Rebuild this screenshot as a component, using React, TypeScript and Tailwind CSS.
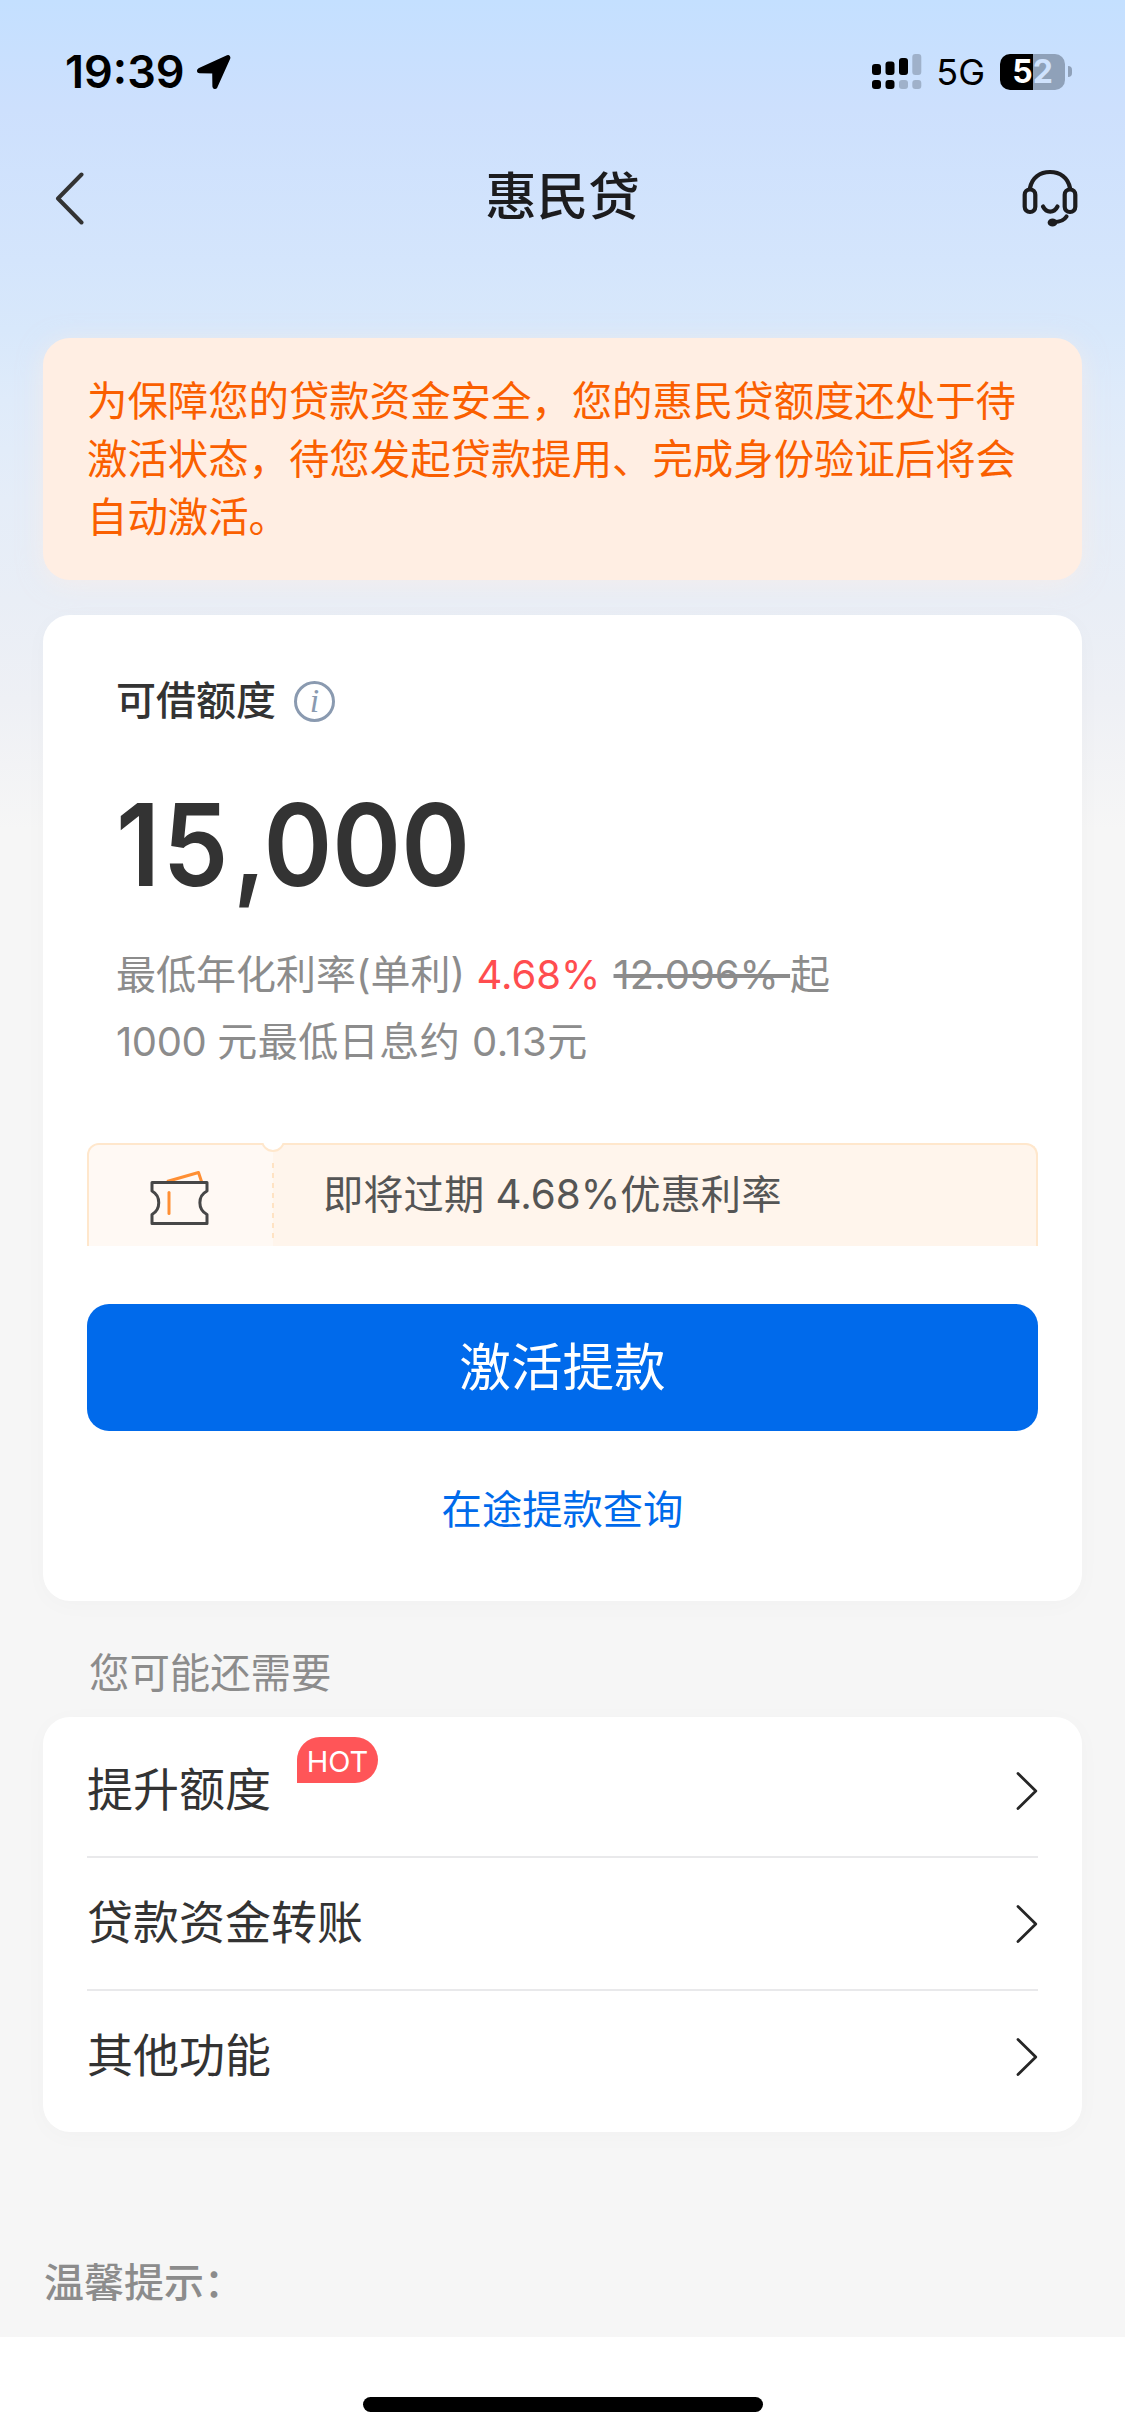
import type { ReactNode } from 'react';

type MenuRowProps = {
  label: string;
  badge?: string;
  last?: boolean;
};

const ArrowIcon = () => (
  <svg width="35" height="36" viewBox="0 0 35 36" className="ml-[11px]">
    <path
      d="M31.5 2.5 L3 15.5 C1.8 16.2 2 18 3.5 18 L17.5 18.3 L17.7 32.5 C17.8 34 19.4 34.2 20.1 33 L33 4.3 C33.4 3 32.6 2 31.5 2.5 Z"
      fill="#000"
      stroke="#000"
      strokeWidth="2.6"
      strokeLinejoin="round"
    />
  </svg>
);

const SignalIcon = () => (
  <svg width="50" height="36" viewBox="0 0 50 36">
    <g fill="#000">
      <rect x="0" y="10" width="9" height="11" rx="3" />
      <rect x="13.5" y="7.5" width="9" height="13.5" rx="3" />
      <rect x="27" y="4" width="9" height="17" rx="3" />
      <rect x="0" y="26" width="9" height="9" rx="3" />
      <rect x="13.5" y="26" width="9" height="9" rx="3" />
    </g>
    <g fill="#9fb1ca">
      <rect x="40.3" y="0" width="9" height="21" rx="3" />
      <rect x="27" y="26" width="9" height="9" rx="3" />
      <rect x="40.3" y="26" width="9" height="9" rx="3" />
    </g>
  </svg>
);

const HeadsetIcon = () => (
  <svg width="56" height="58" viewBox="0 0 56 58" fill="none" stroke="#1c1c1e" strokeWidth="4.2" strokeLinecap="round">
    <path d="M8 19 C10 8.5 18 3 28 3 C38 3 46 8.5 48 19" />
    <rect x="2.7" y="20.5" width="10.6" height="22.5" rx="5.2" />
    <rect x="42.7" y="20.5" width="10.6" height="22.5" rx="5.2" />
    <path d="M21 37.5 C24.5 44.3 32 44.3 35.5 37.5" />
    <path d="M44.5 47.5 C42 51.5 37.5 53 32 53" />
    <ellipse cx="30.5" cy="53.5" rx="2.8" ry="2" fill="#1c1c1e" />
  </svg>
);

const TicketIcon = () => (
  <svg width="60" height="56" viewBox="0 0 60 56" fill="none" strokeWidth="3" strokeLinejoin="round">
    <path d="M17 11.5 L48.5 2.5 L51.5 11.5" stroke="#ff8f33" />
    <path
      d="M2 12.5 H57 V21 C47.5 26 47.5 39.5 57 44.5 V53.5 H2 V44.5 C11 39.5 11 26 2 21 Z"
      stroke="#474747"
    />
    <path d="M19 22.5 V43.5" stroke="#ff8f33" strokeLinecap="round" />
  </svg>
);

const ChevronRight = () => (
  <svg width="22" height="40" viewBox="0 0 22 40" fill="none">
    <path d="M2 2.5 L19.8 20 L2 37.5" stroke="#262626" strokeWidth="2.8" strokeLinecap="round" strokeLinejoin="round" />
  </svg>
);

const StatusBar = () => (
  <div className="flex h-[143px] items-center justify-between pl-[65px] pr-[53px]">
    <div className="flex items-center">
      <span className="text-[45px] font-semibold leading-none text-black">19:39</span>
      <ArrowIcon />
    </div>
    <div className="flex items-center">
      <SignalIcon />
      <span className="ml-[14px] text-[36px] font-normal leading-none text-black">5G</span>
      <div className="ml-[15px] flex h-[36px] w-[65px] items-center justify-center rounded-[10px] bg-[linear-gradient(90deg,#000_33px,#8fa1b9_33px)] text-[32px] font-bold leading-none">
        <span className="text-white">5</span>
        <span className="text-[#cfe2fd]">2</span>
      </div>
      <div className="ml-[3px] h-[11px] w-[4px] rounded-r-full bg-[#8fa1b9]" />
    </div>
  </div>
);

const Card = ({ children, className }: { children: ReactNode; className: string }) => (
  <section className={`mx-[43px] rounded-[27px] bg-white shadow-[0_4px_24px_rgba(0,0,0,0.025)] ${className}`}>
    {children}
  </section>
);

const MenuRow = ({ label, badge, last }: MenuRowProps) => (
  <div
    className={`flex items-center justify-between ${last ? 'h-[131px]' : 'h-[133px] border-b-2 border-[#e9e9eb]'}`}
  >
    <div className="flex items-center text-[46px] leading-none text-[#333]">
      <span className="pb-[4px]">{label}</span>
      {badge && (
        <span className="mb-[61px] ml-[26px] flex h-[46px] w-[81px] items-center justify-center rounded-[23px] rounded-bl-none bg-[#ff5558] pt-[2px] text-[29px] leading-none text-white">
          {badge}
        </span>
      )}
    </div>
    <ChevronRight />
  </div>
);

const App = () => {
  return (
    <div className="flex h-[2435px] w-[1125px] flex-col overflow-hidden bg-[#f6f6f6] bg-[linear-gradient(180deg,#c4e0ff_0px,#cde0fd_110px,#d4e5fc_260px,#d8e8fb_330px,#dfebfa_400px,#e5edf8_500px,#e9eef6_600px,#eef0f5_700px,#f6f6f6_830px)] font-['Inter','Noto_Sans_CJK_SC',sans-serif]">
      <StatusBar />

      {/* Title bar */}
      <header className="flex h-[110px] items-center justify-between pl-[55px] pr-[47px]">
        <svg width="48" height="54" viewBox="0 0 48 54" fill="none">
          <path
            d="M26.5 3.5 L3 27.5 L26.5 51.5"
            stroke="#333"
            strokeWidth="4"
            strokeLinecap="round"
            strokeLinejoin="round"
          />
        </svg>
        <h1 className="pb-[2px] text-[51.5px] font-medium leading-none text-[#1c1c1e]">惠民贷</h1>
        <HeadsetIcon />
      </header>

      {/* Activation notice */}
      <section className="mx-[43px] mt-[85px] h-[242px] rounded-[27px] bg-[#ffeee3] px-[44px] pt-[35px] text-[40.4px] leading-[57.8px] text-[#fa5f00] shadow-[0_4px_24px_rgba(255,238,227,0.5)]">
        <p>为保障您的贷款资金安全，您的惠民贷额度还处于待</p>
        <p>激活状态，待您发起贷款提用、完成身份验证后将会</p>
        <p>自动激活。</p>
      </section>

      {/* Credit limit */}
      <Card className="mt-[35px] h-[986px] px-[44px]">
        <div className="px-[29px] pt-[66px]">
          <div className="flex h-[40px] items-center text-[40px] font-medium leading-none text-[#333]">
            可借额度
            <span className="ml-[18px] flex h-[41px] w-[41px] items-center justify-center rounded-full border-[3px] border-[#8a9ab0] font-['Liberation_Serif',serif] text-[34px] font-normal italic leading-none text-[#8a9ab0]">
              i
            </span>
          </div>
          <div className="mt-[67px] origin-left scale-x-[0.915] text-[114px] font-semibold leading-[114px] text-[#333]">
            <span className="tracking-[3px]">15</span>
            <span className="ml-[2px] mr-[-3px]">,</span>000
          </div>
          <div className="mt-[39px] whitespace-pre text-[40px] leading-[67px] text-[#8c8c8c]">
            <p>
              最低年化利率(单利) <span className="mr-[2px] text-[#ff4d4f]">4.68%</span>{' '}
              <span className="line-through">12.096% </span>起
            </p>
            <p>
              <span className="tracking-[-0.4px]">1000 </span>
              <span className="tracking-[0.5px]">元最低日息约 0.13元</span>
            </p>
          </div>
        </div>

        {/* Coupon */}
        <div className="relative mt-[68px] h-[103px] overflow-hidden">
          <div className="flex h-full rounded-t-[12px] border-2 border-b-0 border-[#ffe7cc] bg-[#fff5ec]">
            <div className="flex w-[184px] justify-center rounded-tl-[10px] bg-[#fff9f4] pr-[2px] pt-[25px]">
              <TicketIcon />
            </div>
            <p className="pl-[50px] pt-[20px] text-[40.3px] leading-[60px] text-[#555]">即将过期 4.68%优惠利率</p>
          </div>
          <span className="absolute left-[185px] top-[20px] h-[75px] w-[2px] bg-[repeating-linear-gradient(180deg,#ffe3c4_0px,#ffe3c4_5px,transparent_5px,transparent_10px)]" />
          <span className="absolute -top-[15px] left-[174px] h-[24px] w-[24px] rounded-full border-2 border-[#ffe7cc] bg-white" />
        </div>

        <button className="mt-[58px] flex h-[127px] w-full items-center justify-center rounded-[22px] bg-[#006aeb] text-[51.6px] leading-none text-white">
          激活提款
        </button>
        <a href="#query" className="mt-[49px] block text-center text-[40.3px] leading-[60px] text-[#006aeb]">
          在途提款查询
        </a>
      </Card>

      <h2 className="ml-[89px] mt-[43px] text-[40.4px] leading-[60px] text-[#8c8c8c]">您可能还需要</h2>

      <Card className="mt-[13px] h-[415px] px-[44px] pt-[8px]">
        <MenuRow label="提升额度" badge="HOT" />
        <MenuRow label="贷款资金转账" />
        <MenuRow label="其他功能" last />
      </Card>

      <p className="ml-[44px] mt-[121px] text-[40px] font-medium leading-[60px] text-[#8c8c8c]">温馨提示：</p>

      {/* Home indicator */}
      <footer className="mt-auto flex h-[98px] shrink-0 justify-center bg-white pt-[60px]">
        <div className="h-[15px] w-[400px] rounded-full bg-black" />
      </footer>
    </div>
  );
};

export default App;
